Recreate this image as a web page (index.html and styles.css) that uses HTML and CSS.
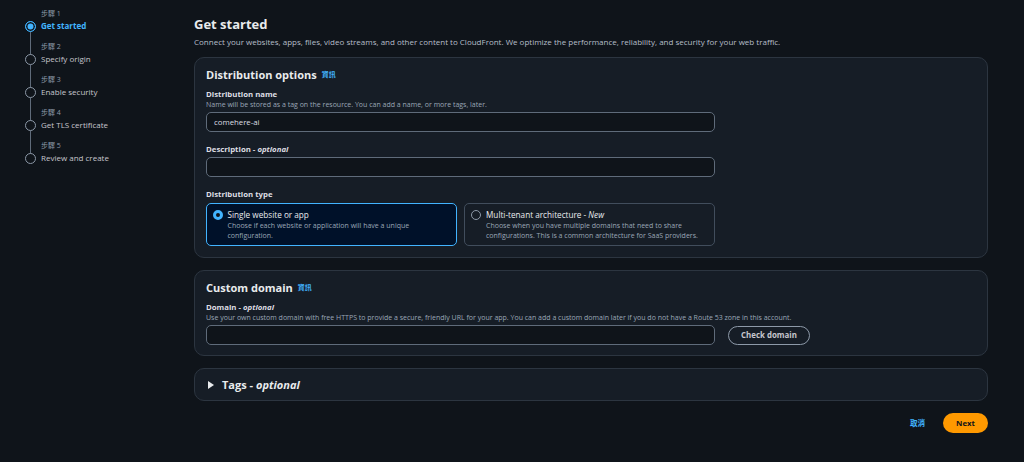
FILE: index.html
```html
<!DOCTYPE html>
<html lang="en">
<head>
<meta charset="utf-8">
<title>Get started</title>
<link rel="stylesheet" href="styles.css">
</head>
<body>
<div class="page">
  <nav class="steps">
    <div class="step active">
      <div class="step-label">步驟 1</div>
      <div class="step-row"><span class="dot"></span><span class="step-title">Get started</span></div>
    </div>
    <div class="step">
      <div class="step-label">步驟 2</div>
      <div class="step-row"><span class="dot"></span><span class="step-title">Specify origin</span></div>
    </div>
    <div class="step">
      <div class="step-label">步驟 3</div>
      <div class="step-row"><span class="dot"></span><span class="step-title">Enable security</span></div>
    </div>
    <div class="step">
      <div class="step-label">步驟 4</div>
      <div class="step-row"><span class="dot"></span><span class="step-title">Get TLS certificate</span></div>
    </div>
    <div class="step last">
      <div class="step-label">步驟 5</div>
      <div class="step-row"><span class="dot"></span><span class="step-title">Review and create</span></div>
    </div>
  </nav>

  <main class="main">
    <h1 class="page-title">Get started</h1>
    <p class="page-desc">Connect your websites, apps, files, video streams, and other content to CloudFront. We optimize the performance, reliability, and security for your web traffic.</p>

    <section class="card">
      <h2 class="card-title">Distribution options <a class="info">資訊</a></h2>
      <div class="form">
        <div class="field">
          <div class="label">Distribution name</div>
          <div class="hint">Name will be stored as a tag on the resource. You can add a name, or more tags, later.</div>
          <div class="input">comehere-ai</div>
        </div>
        <div class="field">
          <div class="label">Description - <i>optional</i></div>
          <div class="input"></div>
        </div>
        <div class="field">
          <div class="label">Distribution type</div>
          <div class="tiles">
            <div class="tile selected">
              <span class="radio"></span>
              <div>
                <div class="tile-title">Single website or app</div>
                <div class="tile-desc">Choose if each website or application will have a unique configuration.</div>
              </div>
            </div>
            <div class="tile">
              <span class="radio"></span>
              <div>
                <div class="tile-title">Multi-tenant architecture - <i>New</i></div>
                <div class="tile-desc">Choose when you have multiple domains that need to share configurations. This is a common architecture for SaaS providers.</div>
              </div>
            </div>
          </div>
        </div>
      </div>
    </section>

    <section class="card domain-card">
      <h2 class="card-title">Custom domain <a class="info">資訊</a></h2>
      <div class="field">
        <div class="label">Domain - <i>optional</i></div>
        <div class="hint">Use your own custom domain with free HTTPS to provide a secure, friendly URL for your app. You can add a custom domain later if you do not have a Route 53 zone in this account.</div>
        <div class="input-row">
          <div class="input"></div>
          <button class="btn-outline">Check domain</button>
        </div>
      </div>
    </section>

    <section class="card collapsed">
      <h2 class="card-title expander"><span class="caret"></span>Tags - <i>optional</i></h2>
    </section>

    <div class="actions">
      <a class="link-btn">取消</a>
      <button class="btn-primary">Next</button>
    </div>
  </main>
</div>
</body>
</html>
```

FILE: styles.css
```css
* { box-sizing: border-box; }

html, body {
  margin: 0;
  padding: 0;
  background: #0f141a;
  height: 100%;
}

body {
  font-family: "Open Sans", "Noto Sans CJK TC", sans-serif;
  color: #c6c6cd;
  font-size: 8px;
  line-height: 12px;
}

.page {
  display: flex;
  width: 1024px;
  min-height: 462px;
}

/* Steps navigation */
.steps {
  width: 194px;
  padding: 9px 0 0 25px;
  flex-shrink: 0;
}

.step {
  position: relative;
  height: 33px;
}

.step::after {
  content: "";
  position: absolute;
  left: 5px;
  top: 23px;
  width: 1px;
  height: 24px;
  background: #5f6b7a;
}

.step.last::after { display: none; }

.step-label {
  padding-left: 16px;
  font-size: 7px;
  line-height: 10px;
  color: #8d99a8;
}

.step-row {
  display: flex;
  align-items: center;
  gap: 5px;
  height: 14px;
}

.dot {
  width: 11px;
  height: 11px;
  border-radius: 50%;
  border: 1.5px solid #8d99a8;
  flex-shrink: 0;
  background: #0f141a;
}

.step.active .dot {
  border-color: #42b4ff;
  box-shadow: inset 0 0 0 1.5px #0f141a;
  background: #42b4ff;
}

.step-title {
  font-size: 8px;
  color: #c6c6cd;
}

.step.active .step-title {
  color: #42b4ff;
  font-weight: 700;
}

/* Main column */
.main {
  width: 794px;
  padding-top: 15px;
}

.page-title {
  margin: 0;
  font-size: 13px;
  line-height: 18px;
  font-weight: 700;
  color: #e9ebed;
}

.page-desc {
  margin: 3px 0 0;
  font-size: 8px;
  line-height: 12px;
  color: #b6bec9;
}

.card {
  margin-top: 9px;
  background: #161d26;
  border: 1px solid #2c3540;
  border-radius: 10px;
  padding: 8px 11px 11px;
}

.card + .card { margin-top: 12px; }

.domain-card { padding-bottom: 10px; }

.card-title {
  margin: 0;
  font-size: 11px;
  line-height: 16px;
  font-weight: 700;
  color: #e9ebed;
  display: flex;
  align-items: center;
}

.info {
  font-size: 7px;
  font-weight: 700;
  color: #42b4ff;
  margin-left: 5px;
  margin-top: 1px;
}

.form {
  width: 509px;
}

.field {
  margin-top: 5px;
}

.field + .field {
  margin-top: 11px;
}

.label {
  font-size: 7.8px;
  line-height: 12px;
  font-weight: 700;
  color: #dedee3;
}

.label i { font-weight: 700; }

.hint {
  font-size: 7px;
  line-height: 10px;
  color: #9ba7b6;
}

.input {
  margin-top: 2px;
  height: 20px;
  border: 1px solid #5f6b7a;
  border-radius: 5px;
  background: #0f141a;
  padding: 0 7px;
  font-size: 7.8px;
  line-height: 18px;
  color: #dedee3;
}

.tiles {
  display: grid;
  grid-template-columns: 1fr 1fr;
  gap: 7px;
  margin-top: 3px;
}

.tile {
  display: flex;
  gap: 5px;
  height: 43px;
  border: 1px solid #414d5c;
  border-radius: 5px;
  padding: 5px 6px;
}

.tile.selected {
  border: 1.5px solid #42b4ff;
  background: #001129;
  padding: 4.5px 5.5px;
}

.radio {
  width: 10px;
  height: 10px;
  border-radius: 50%;
  border: 1px solid #8d99a8;
  flex-shrink: 0;
  margin-top: 1px;
}

.tile.selected .radio {
  border: 3px solid #42b4ff;
  background: #0f141a;
}

.tile-title {
  font-size: 8.2px;
  line-height: 12px;
  color: #e9ebed;
}

.tile-desc {
  font-size: 7px;
  line-height: 10px;
  color: #9ba7b6;
}

.input-row {
  display: flex;
  align-items: center;
  gap: 13px;
  margin-top: 2px;
}

.input-row .input {
  margin-top: 0;
  width: 509px;
}

.btn-outline {
  font-family: inherit;
  width: 82px;
  height: 19px;
  border: 1.5px solid #8d99a8;
  border-radius: 10px;
  background: transparent;
  color: #c6c6cd;
  font-size: 7.9px;
  font-weight: 700;
  padding: 0;
}

.card.collapsed {
  padding: 8px 11px 7px;
}

.expander i {
  margin-left: 3px;
}

.caret {
  width: 0;
  height: 0;
  border-left: 6px solid #e9ebed;
  border-top: 4px solid transparent;
  border-bottom: 4px solid transparent;
  margin: 0 8px 0 2px;
}

.actions {
  display: flex;
  justify-content: flex-end;
  align-items: center;
  gap: 18px;
  margin-top: 12px;
}

.link-btn {
  font-size: 7.5px;
  font-weight: 700;
  color: #42b4ff;
}

.btn-primary {
  font-family: inherit;
  width: 45px;
  height: 20px;
  border: none;
  border-radius: 10px;
  background: #ff9900;
  color: #0f141a;
  font-size: 7.8px;
  font-weight: 700;
  padding: 0;
}
```
